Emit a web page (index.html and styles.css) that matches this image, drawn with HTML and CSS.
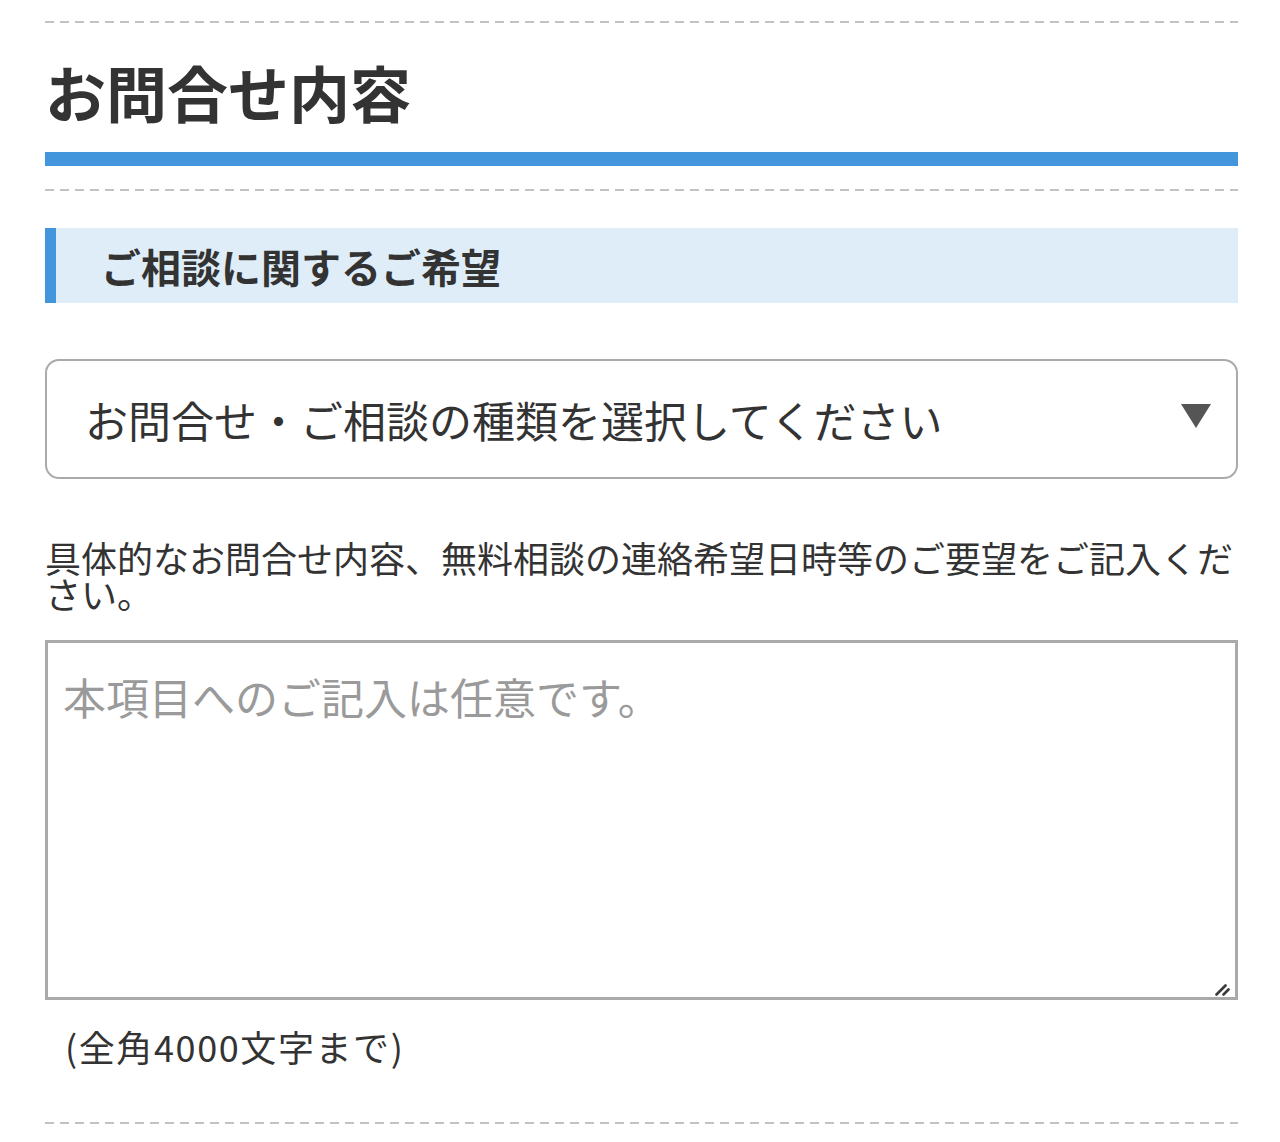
FILE: index.html
```html
<!DOCTYPE html>
<html lang="ja">
<head>
<meta charset="utf-8">
<title>お問合せ内容</title>
<link rel="stylesheet" href="styles.css">
</head>
<body>
<div class="page">
  <div class="divider divider-top"></div>
  <h2 class="title">お問合せ内容</h2>
  <div class="title-bar"></div>
  <div class="divider divider-mid"></div>
  <h3 class="subhead">ご相談に関するご希望</h3>
  <div class="select-wrap">
    <select class="select">
      <option>お問合せ・ご相談の種類を選択してください</option>
    </select>
    <span class="select-arrow"></span>
  </div>
  <p class="desc">具体的なお問合せ内容、無料相談の連絡希望日時等のご要望をご記入ください。</p>
  <div class="textarea-wrap">
    <textarea class="textarea" placeholder="本項目へのご記入は任意です。"></textarea>
    <svg class="grip" width="16" height="12" viewBox="0 0 16 12" aria-hidden="true">
      <line x1="1.5" y1="10.5" x2="10.5" y2="1.5" stroke="#3c3c3c" stroke-width="2.6" stroke-linecap="round"/>
      <line x1="8.5" y1="10.5" x2="13.5" y2="5.5" stroke="#3c3c3c" stroke-width="2.6" stroke-linecap="round"/>
    </svg>
  </div>
  <p class="note">(全角4000文字まで)</p>
  <div class="divider divider-bottom"></div>
</div>
</body>
</html>
```

FILE: styles.css
```css
html, body {
  margin: 0;
  padding: 0;
  background: #ffffff;
}

body {
  font-family: "Noto Sans CJK JP", "Noto Sans", sans-serif;
  color: #333333;
}

.page {
  padding: 0 42px 0 45px;
  display: flex;
  flex-direction: column;
}

.divider {
  height: 2px;
  background: repeating-linear-gradient(to right, #c2c2c2 0 9px, transparent 9px 15px);
}

.divider-top {
  margin-top: 21px;
}

.title {
  margin: 39px 0 0;
  font-size: 61px;
  line-height: 60px;
  font-weight: 700;
  color: #333333;
  letter-spacing: 0;
}

.title-bar {
  margin-top: 30px;
  height: 14px;
  background: #4396dc;
}

.divider-mid {
  margin-top: 23px;
}

.subhead {
  margin: 37px 0 0;
  height: 75px;
  box-sizing: border-box;
  border-left: 11px solid #4396dc;
  background: #deedf8;
  padding-left: 45px;
  display: flex;
  align-items: center;
  font-size: 40px;
  font-weight: 700;
  line-height: 40px;
  color: #333333;
}

.select-wrap {
  position: relative;
  margin-top: 56px;
}

.select {
  appearance: none;
  -webkit-appearance: none;
  width: 100%;
  height: 120px;
  box-sizing: border-box;
  border: 2px solid #aaaaaa;
  border-radius: 14px;
  background: #ffffff;
  padding: 0 80px 0 38px;
  font-family: "Noto Sans CJK JP", "Noto Sans", sans-serif;
  font-size: 43px;
  color: #333333;
  outline: none;
}

.select-arrow {
  position: absolute;
  right: 27px;
  top: 45px;
  width: 0;
  height: 0;
  border-left: 15px solid transparent;
  border-right: 15px solid transparent;
  border-top: 24px solid #555555;
}

.desc {
  margin: 60px 0 0;
  font-size: 36px;
  line-height: 36px;
  color: #333333;
}

.textarea-wrap {
  position: relative;
  margin-top: 29px;
}

.textarea {
  width: 100%;
  height: 360px;
  box-sizing: border-box;
  border: 3px solid #aaaaaa;
  border-radius: 0;
  padding: 28px 15px;
  font-family: "Noto Sans CJK JP", "Noto Sans", sans-serif;
  font-size: 43px;
  line-height: 50px;
  color: #333333;
  background: #ffffff;
  outline: none;
  display: block;
  resize: none;
}

.textarea::placeholder {
  color: #9a9a9a;
}

.grip {
  position: absolute;
  right: 7px;
  bottom: 4px;
}

.note {
  margin: 28px 0 0 20px;
  font-size: 36px;
  line-height: 36px;
  letter-spacing: 1.6px;
  color: #333333;
}

.divider-bottom {
  margin-top: 58px;
}
```
